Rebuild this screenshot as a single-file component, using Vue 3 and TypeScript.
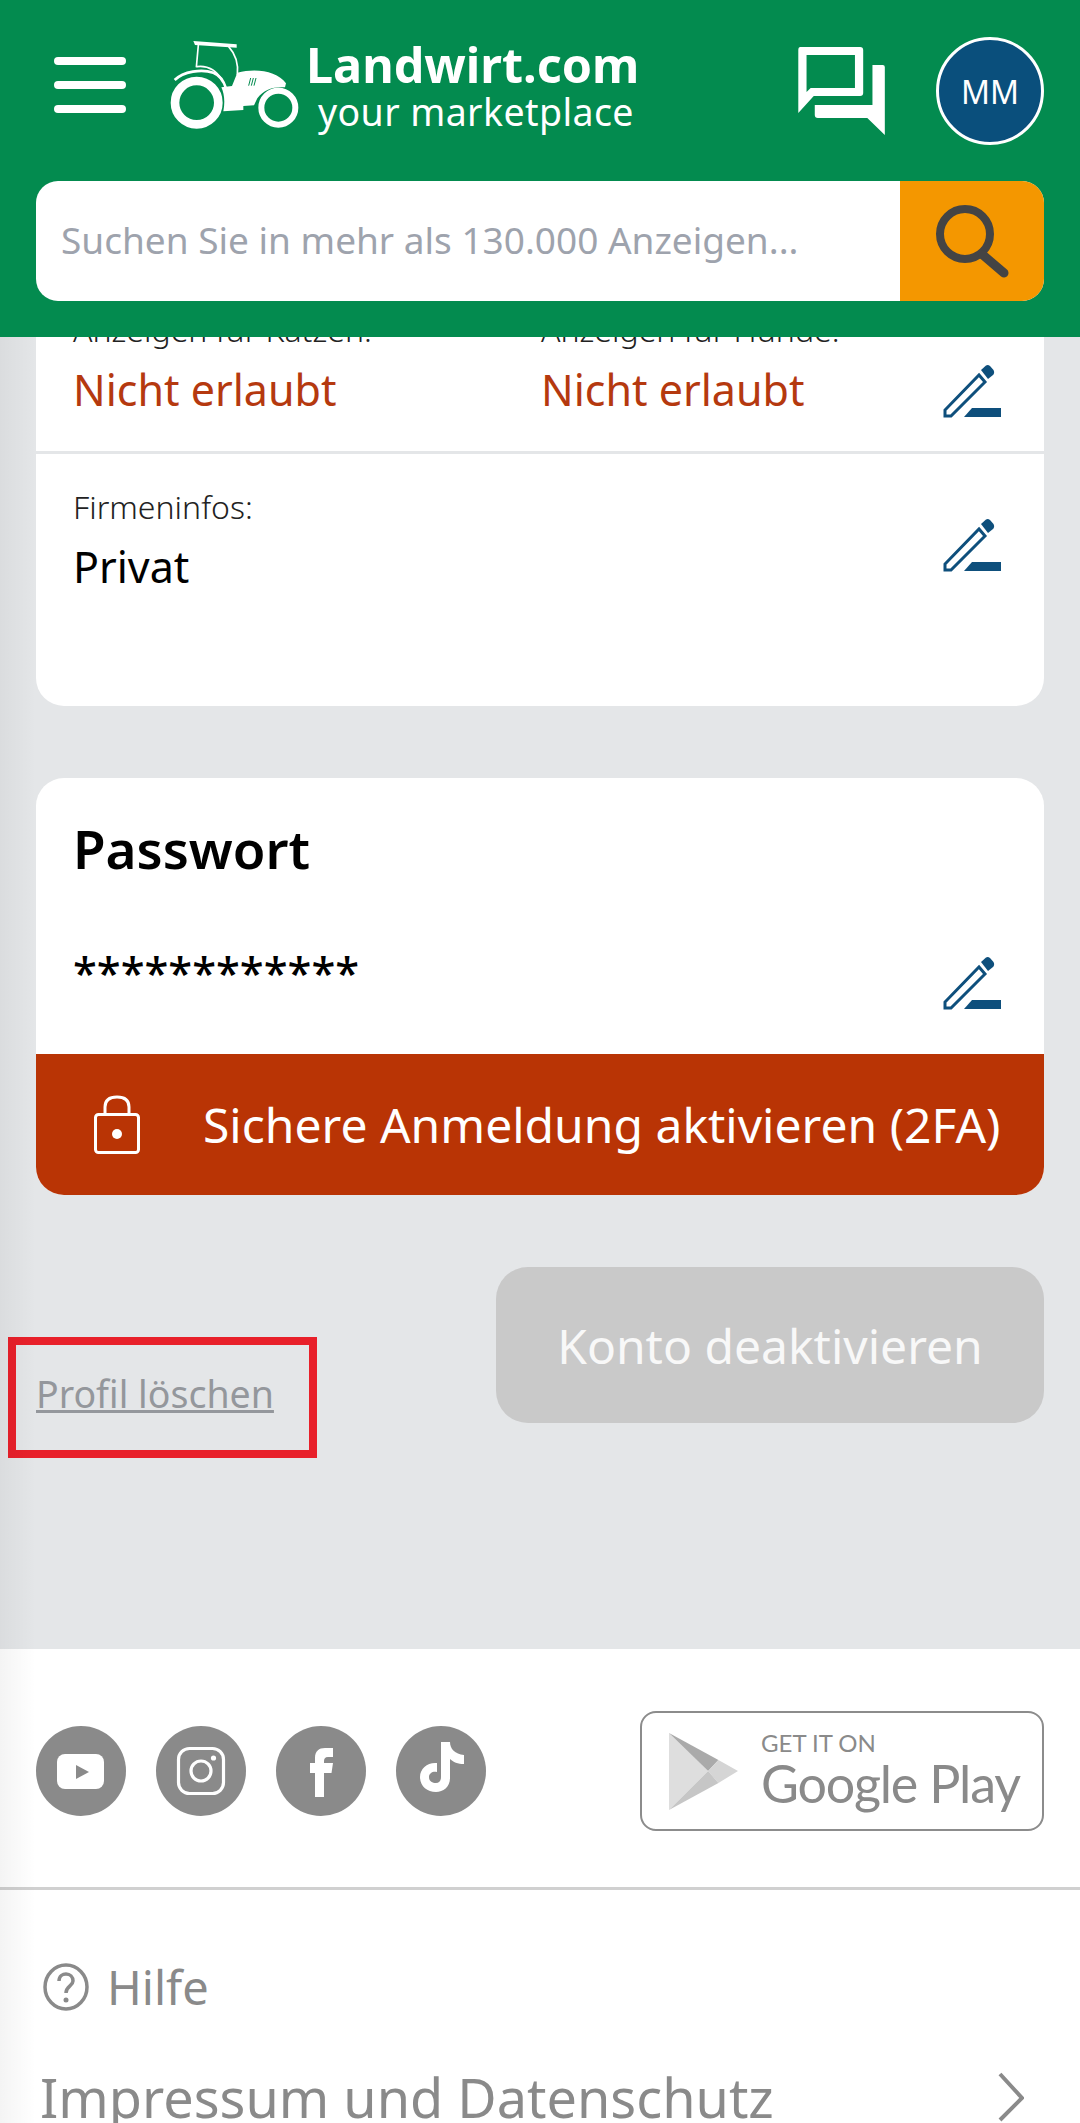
<script setup lang="ts">
interface Field { label: string; value: string; width: number }
const permissions: Field[] = [
  { label: 'Anzeigen für Katzen:', value: 'Nicht erlaubt', width: 468 },
  { label: 'Anzeigen für Hunde:', value: 'Nicht erlaubt', width: 379 },
]
</script>

<template>
  <div class="page">
    <header class="header">
      <div class="top">
        <div class="burger"><i></i><i></i><i></i></div>
        <svg class="tractor" viewBox="0 0 450 330">
          <g fill="#fff">
            <polygon points="100,33 230,43 230,53 105,45" />
            <path d="M232 128C290 113 352 124 378 160L375 172C340 170 312 178 292 205L282 226L250 228L250 240L190 244C196 212 192 190 184 172L216 168Z" />
          </g>
          <g fill="none" stroke="#fff">
            <circle cx="110" cy="218" r="65" stroke-width="26" />
            <circle cx="355" cy="233" r="51" stroke-width="18" />
            <path d="M115 45L109 112M206 50C226 72 236 100 232 135" stroke-width="5" />
            <path d="M44 150C70 124 125 116 160 128C180 136 192 155 198 175" stroke-width="8" />
            <path d="M110 110C140 106 168 120 186 150" stroke-width="5" />
            <path d="M266 167L272 144M274 167L280 144M282 167L288 144" stroke="#038b4f" stroke-width="3" />
          </g>
        </svg>
        <div class="brand">
          <div class="brand-name">Landwirt.com</div>
          <div class="brand-sub">your marketplace</div>
        </div>
        <svg class="chat" viewBox="0 0 100 100" preserveAspectRatio="none">
          <path fill="#fff" fill-rule="evenodd" d="M12 7Q10 7 10 10V73L25 56H70Q73 56 73 53V10Q73 7 70 7ZM18 15H65V48H22L18 52Z" />
          <path fill="#fff" d="M82 25H92Q94 25 94 27V95L77 78H29Q26 78 26 75V65H82Z" />
        </svg>
        <div class="avatar">MM</div>
      </div>
      <div class="search">
        <div class="search-text">Suchen Sie in mehr als 130.000 Anzeigen...</div>
        <div class="search-btn">
          <svg viewBox="0 0 144 120" class="search-icon">
            <circle cx="65" cy="53" r="25" fill="none" stroke="#444" stroke-width="8" />
            <path d="M83 74L104 92" stroke="#444" stroke-width="9" stroke-linecap="round" />
          </svg>
        </div>
      </div>
    </header>

    <main class="main">
      <section class="card card-first">
        <div class="row row-perm">
          <div v-for="f in permissions" :key="f.label" class="col" :style="{ width: f.width + 'px' }">
            <div class="label">{{ f.label }}</div>
            <div class="value warn">{{ f.value }}</div>
          </div>
          <svg class="edit edit-perm" viewBox="0 0 100 80">
            <use href="#pencil" />
          </svg>
        </div>
        <div class="row row-firm">
          <div class="col">
            <div class="label">Firmeninfos:</div>
            <div class="value">Privat</div>
          </div>
          <svg class="edit edit-firm" viewBox="0 0 100 80">
            <use href="#pencil" />
          </svg>
        </div>
      </section>

      <section class="card card-pass">
        <h2 class="pass-title">Passwort</h2>
        <div class="pass-row">
          <div class="stars">************</div>
          <svg class="edit edit-pass" viewBox="0 0 100 80">
            <use href="#pencil" />
          </svg>
        </div>
        <div class="twofa">
          <svg class="lock" viewBox="0 0 46 60">
            <rect x="1.500" y="19.500" width="43" height="38" rx="3" fill="none" stroke="#fff" stroke-width="3" />
            <path d="M11 19V12C11 5 16 2 23 2S35 5 35 12V19" fill="none" stroke="#fff" stroke-width="3" />
            <circle cx="23" cy="39" r="5" fill="#fff" />
          </svg>
          <span>Sichere Anmeldung aktivieren (2FA)</span>
        </div>
      </section>

      <div class="actions">
        <div class="delete-wrap">
          <a class="delete">Profil löschen</a>
          <div class="highlight"></div>
        </div>
        <div class="deactivate">Konto deaktivieren</div>
      </div>
    </main>

    <footer class="footer">
      <div class="social-row">
        <div class="socials">
          <div class="soc">
            <svg viewBox="0 0 90 90">
              <rect x="21" y="28" width="47" height="35" rx="8" fill="#fff" />
              <polygon points="40,39 40,53 53,46" fill="#8a8a8a" />
            </svg>
          </div>
          <div class="soc">
            <svg viewBox="0 0 90 90" fill="none" stroke="#fff">
              <rect x="22.500" y="22.500" width="45" height="45" rx="11" stroke-width="3.200" />
              <circle cx="45" cy="45" r="10" stroke-width="3.200" />
              <circle cx="57.500" cy="32" r="2.600" fill="#fff" stroke="none" />
            </svg>
          </div>
          <div class="soc">
            <svg viewBox="0 0 90 90">
              <path fill="#fff" d="M39 71V47H34V37H39V32C39 25 43 22 49 22H57V31H52C49 31 48 33 48 35V37H57L55.500 47H48V71Z" />
            </svg>
          </div>
          <div class="soc">
            <svg viewBox="0 0 90 90">
              <path fill="#fff" d="M45 16H54C54 23 59 28 68 29V38C62 38 57 36 54 33V52C54 61 47 66 40 66C31 66 24 60 24 51C24 42 32 36 41 37V46C37 45 33 47 33 51C33 55 36 57 40 57C43 57 45 55 45 51Z" />
            </svg>
          </div>
        </div>
        <div class="gplay">
          <svg class="play" viewBox="0 0 67 78" preserveAspectRatio="none">
            <polygon points="0,1 38,39 0,78" fill="#dedede" />
            <polygon points="0,1 48,28 38,39" fill="#aaa" />
            <polygon points="48,28 67,39 48,51 38,39" fill="#d5d5d5" />
            <polygon points="0,78 38,39 48,51" fill="#c6c6c6" />
          </svg>
          <div class="gplay-text">
            <div class="get">GET IT ON</div>
            <div class="gname">Google Play</div>
          </div>
        </div>
      </div>
      <div class="links">
        <div class="help">
          <svg class="help-icon" viewBox="0 0 46 48">
            <ellipse cx="23" cy="24" rx="21" ry="22" fill="none" stroke="#8a8a8a" stroke-width="3.500" />
            <path d="M16 18C16 13 20 11 23 11C27 11 30 14 30 18C30 23 23 23 23 30" fill="none" stroke="#8a8a8a" stroke-width="3.500" />
            <circle cx="23" cy="37" r="2.500" fill="#8a8a8a" />
          </svg>
          <span>Hilfe</span>
        </div>
        <div class="impressum">
          <span>Impressum und Datenschutz</span>
          <svg class="chevron" viewBox="0 0 26 50">
            <path d="M2 2L24 26L2 48" fill="none" stroke="#8a8a8a" stroke-width="4" />
          </svg>
        </div>
      </div>
    </footer>

    <div class="edge"></div>

    <svg width="0" height="0" class="defs">
      <defs>
        <g id="pencil">
          <path d="M25 66V60L59 25L65 32L31 66Z" fill="none" stroke="#0e4f7c" stroke-width="3" />
          <path d="M61 20L66 15.500Q68 14.500 70 16L73.500 20Q75 23 73 25L68 29Z" fill="#0e4f7c" />
          <polygon points="44,67 52,58 81,58 81,67" fill="#0e4f7c" />
        </g>
      </defs>
    </svg>
  </div>
</template>

<style scoped>
.page {
  position: relative;
  width: 1080px;
  height: 2123px;
  overflow: hidden;
  background: #e4e6e8;
  font-family: "Noto Sans", "Open Sans", sans-serif;
  color: #000;
}
.defs { position: absolute; }

.header {
  position: absolute;
  top: 0;
  left: 0;
  right: 0;
  z-index: 5;
  height: 337px;
  box-sizing: border-box;
  background: #038b4f;
  padding: 0 36px;
}
.top {
  height: 181px;
  display: flex;
  align-items: flex-start;
}
.burger {
  width: 72px;
  margin: 57px 0 0 18px;
  display: flex;
  flex-direction: column;
  gap: 16px;
  flex: none;
}
.burger i {
  display: block;
  height: 8px;
  border-radius: 4px;
  background: #fff;
}
.tractor {
  width: 150px;
  height: 110px;
  margin: 30px 0 0 34px;
  flex: none;
}
.brand {
  margin: 36px 0 0 -4px;
  color: #fff;
}
.brand-name {
  font-size: 48.500px;
  font-weight: 700;
  line-height: 56px;
}
.brand-sub {
  font-size: 37.500px;
  line-height: 40px;
  margin-left: 12px;
  letter-spacing: 0.4px;
}
.chat {
  width: 103px;
  height: 100px;
  margin: 40px 0 0 auto;
  flex: none;
}
.avatar {
  width: 108px;
  height: 108px;
  margin: 37px 0 0 45px;
  box-sizing: border-box;
  flex: none;
  border: 3px solid #fff;
  border-radius: 50%;
  background: #0a4f7c;
  color: #fff;
  font-size: 32px;
  display: flex;
  align-items: center;
  justify-content: center;
}
.search {
  height: 120px;
  display: flex;
  border-radius: 22px;
  overflow: hidden;
  background: #fff;
}
.search-text {
  flex: 1;
  padding-left: 25px;
  line-height: 118px;
  font-size: 37px;
  color: #9ea3ad;
}
.search-btn {
  width: 144px;
  height: 120px;
  background: #f49700;
}
.search-icon {
  display: block;
  width: 144px;
  height: 120px;
}

.main {
  padding: 200px 36px 0;
}
.card {
  background: #fff;
  border-radius: 28px;
  overflow: hidden;
}
.row {
  display: flex;
  padding: 0 37px;
}
.row-perm {
  padding-top: 110px;
  height: 251px;
  box-sizing: border-box;
}
.row-perm .col { flex: none; }
.row-firm {
  border-top: 3px solid #e4e6e8;
  padding-top: 33px;
  height: 255px;
  box-sizing: border-box;
}
.label {
  font-size: 32px;
  font-weight: 300;
  line-height: 40px;
  color: #222;
}
.value {
  font-size: 43px;
  line-height: 56px;
  margin-top: 12px;
}
.warn { color: #b5390f; }
.edit {
  width: 100px;
  height: 80px;
  flex: none;
  margin-left: auto;
  margin-right: -13px;
}
.edit-perm { margin-top: 40px; }
.edit-firm { margin-top: 17px; }
.card-first { margin-bottom: 72px; }
.card-pass { padding-top: 1px; }
.pass-title {
  margin: 40px 37px 0;
  font-size: 53px;
  line-height: 60px;
  font-weight: 600;
}
.pass-row {
  height: 175px;
  padding: 0 37px;
  display: flex;
  box-sizing: border-box;
}
.stars {
  font-size: 43.500px;
  line-height: 60px;
  margin-top: 63px;
  font-weight: 500;
}
.edit-pass { margin-top: 63px; }
.twofa {
  height: 141px;
  background: #b93405;
  color: #fff;
  display: flex;
  align-items: center;
  padding-left: 58px;
  font-size: 48px;
}
.lock {
  width: 46px;
  height: 60px;
  margin-right: 63px;
}
.actions {
  display: flex;
  justify-content: space-between;
  align-items: flex-end;
  margin-top: 72px;
}
.delete-wrap {
  position: relative;
  margin-bottom: 6px;
}
.delete {
  font-size: 37.500px;
  line-height: 46px;
  color: #94979c;
  text-decoration: underline;
  display: block;
}
.highlight {
  position: absolute;
  left: -28px;
  top: -34px;
  width: 309px;
  height: 121px;
  box-sizing: border-box;
  border: 8px solid #e8202a;
}
.deactivate {
  width: 548px;
  height: 156px;
  border-radius: 32px;
  background: #c9c9c9;
  color: #f8f8f8;
  font-size: 48px;
  display: flex;
  align-items: center;
  justify-content: center;
}
.footer {
  margin-top: 226px;
  background: #fff;
  color: #8a8a8a;
}
.social-row {
  height: 241px;
  box-sizing: border-box;
  padding: 62px 36px 0;
  display: flex;
  justify-content: space-between;
  align-items: flex-start;
  border-bottom: 3px solid #d0d0d0;
}
.socials {
  display: flex;
  gap: 30px;
  margin-top: 15px;
}
.soc {
  width: 90px;
  height: 90px;
  border-radius: 50%;
  background: #8a8a8a;
}
.soc svg { display: block; width: 90px; height: 90px; }
.gplay {
  width: 404px;
  height: 120px;
  box-sizing: border-box;
  border: 2.500px solid #8c8c8c;
  border-radius: 16px;
  display: flex;
  align-items: center;
  padding-left: 27px;
}
.play { width: 69px; height: 78px; flex: none; }
.gplay-text { margin-left: 23px; }
.get {
  font-family: "Lato", sans-serif;
  font-size: 24px;
  line-height: 24px;
}
.gname {
  font-family: "Lato", sans-serif;
  font-size: 52px;
  line-height: 56px;
  letter-spacing: -1.200px;
}
.links {
  padding: 72px 56px 0 40px;
}
.help {
  display: flex;
  align-items: center;
  font-size: 47px;
  margin-left: 2px;
  height: 50px;
}
.help-icon { width: 48px; height: 48px; margin-right: 17px; }
.impressum {
  margin-top: 50px;
  display: flex;
  justify-content: space-between;
  align-items: flex-start;
  font-size: 54px;
  line-height: 70px;
}
.chevron { width: 26px; height: 50px; margin-top: 10px; }
.edge {
  position: absolute;
  left: 0;
  top: 337px;
  bottom: 0;
  width: 36px;
  pointer-events: none;
  background: linear-gradient(to right, rgba(0,0,0,.045), rgba(0,0,0,0));
}
</style>
